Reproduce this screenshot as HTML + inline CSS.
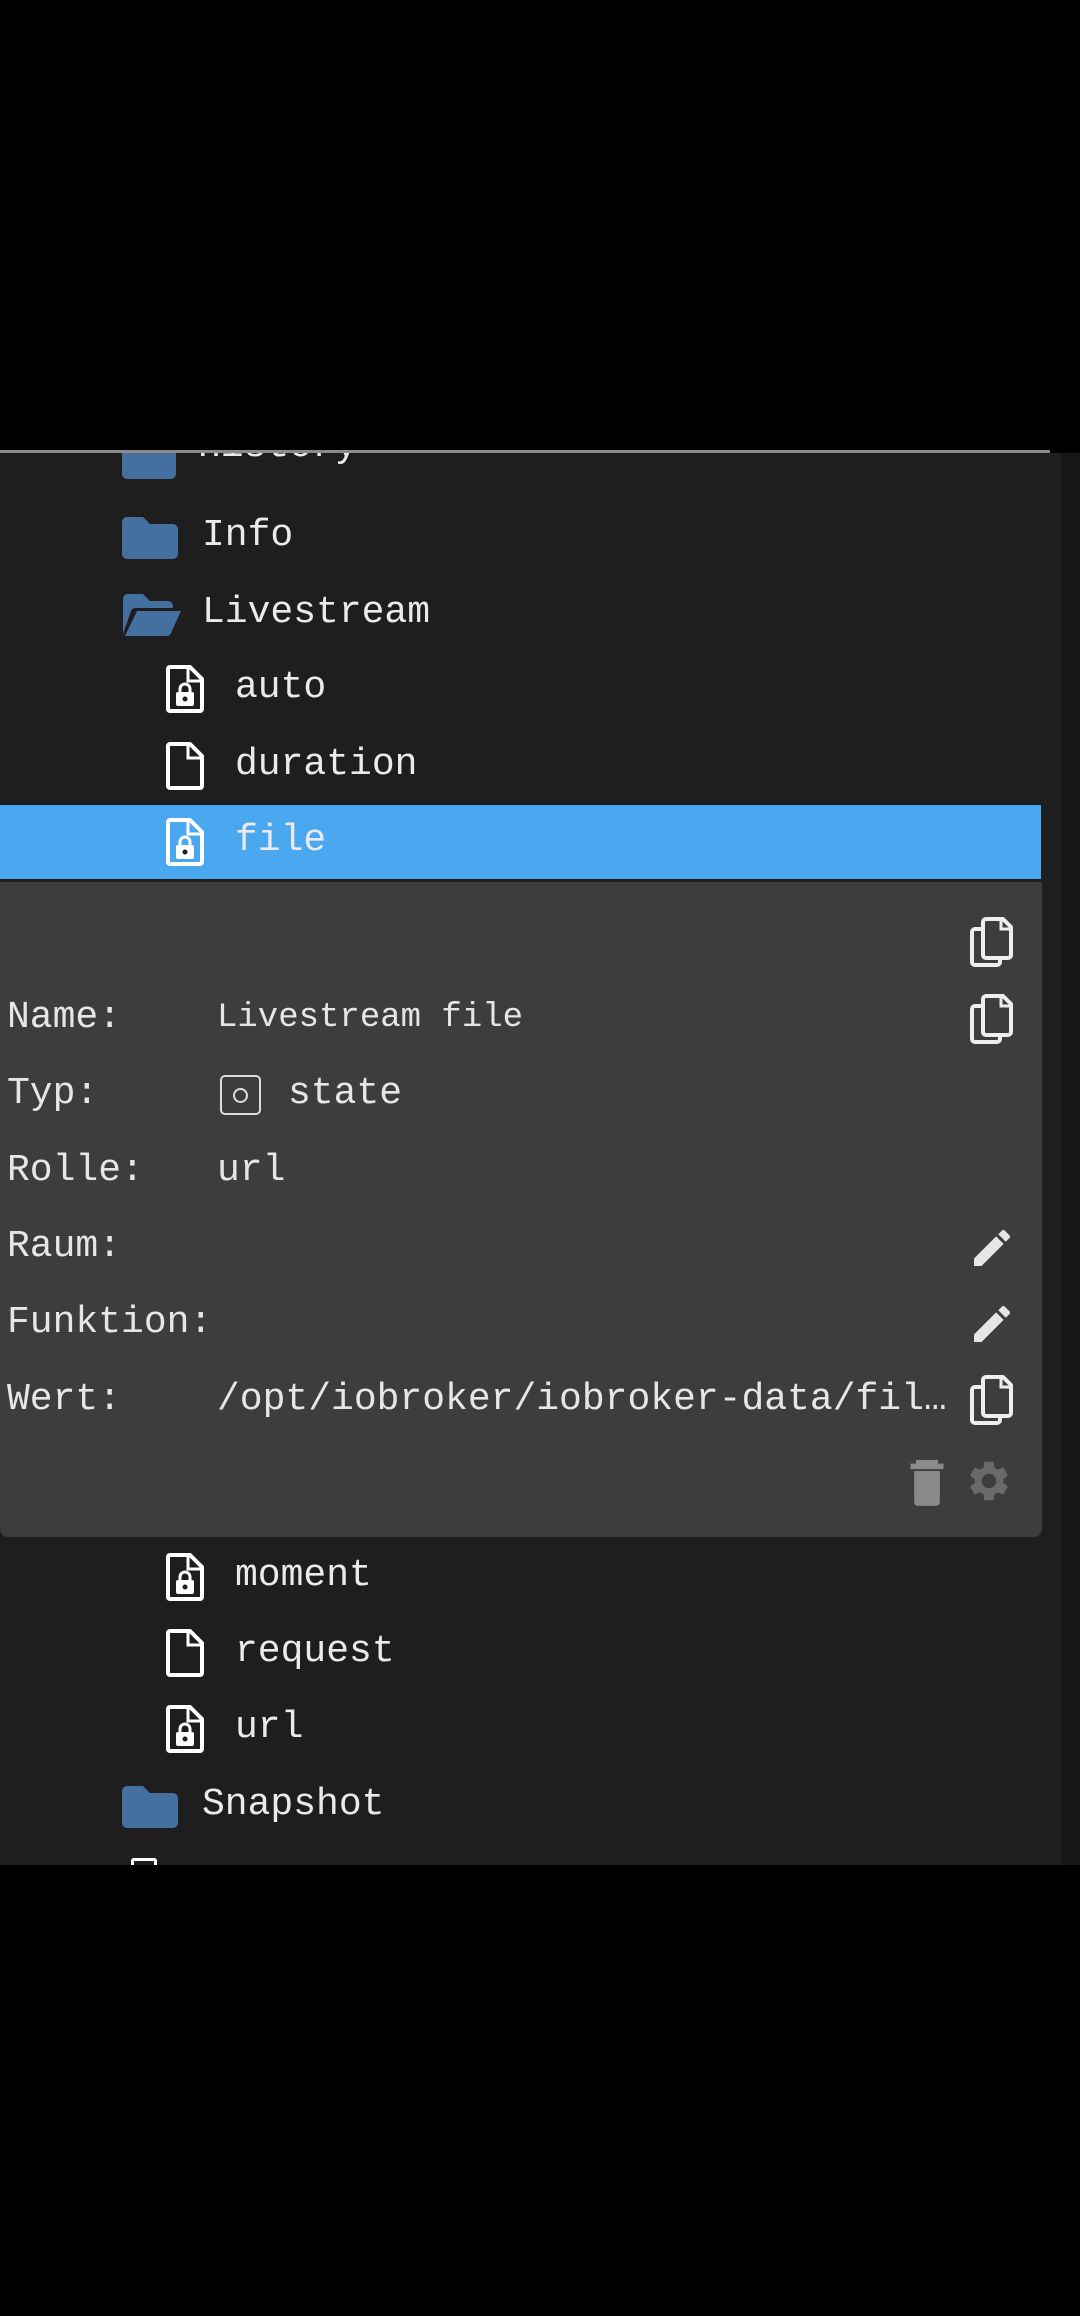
<!DOCTYPE html>
<html><head><meta charset="utf-8"><style>
*{margin:0;padding:0;box-sizing:border-box}
body{width:1080px;height:2316px;background:#000;position:relative;overflow:hidden;font-family:"Liberation Mono",monospace;}
.a{position:absolute}
.t{position:absolute;color:#eaeaea;font-size:38px;line-height:44px;white-space:nowrap}
.c{position:absolute;color:#e6e6e6;font-size:38px;line-height:44px;white-space:nowrap}
</style></head><body>
<div class="a" style="left:0;top:450px;width:1050px;height:3px;background:#8a8a8a"></div>
<div class="a" style="left:0;top:453px;width:1062px;height:1412px;background:#1e1e1e;overflow:hidden">
</div>
<div class="a" style="left:1062px;top:453px;width:18px;height:1412px;background:#161616"></div>
<!-- history folder partial -->
<div class="a" style="left:122px;top:453px;width:54px;height:28px;overflow:hidden"><div style="position:absolute;top:-14px;width:54px;height:40px;background:#43709f;border-radius:5px"></div></div>
<div class="a" style="left:198px;top:453px;width:200px;height:22px;overflow:hidden"><div class="t" style="top:-28px;left:0">History</div></div>
<svg class="a" style="left:122px;top:517px" width="56" height="42" viewBox="0 0 56 42"><path d="M5 0h16l7 7h23a5 5 0 0 1 5 5v25a5 5 0 0 1-5 5H5a5 5 0 0 1-5-5V5a5 5 0 0 1 5-5z" fill="#43709f"/></svg>
<div class="t" style="left:202px;top:514px">Info</div>
<svg class="a" style="left:122px;top:594px" width="60" height="42" viewBox="0 0 60 42"><path d="M5 0h16l7 7h18a5 5 0 0 1 5 5v2H14a5 5 0 0 0-5 3L1 40V5a5 5 0 0 1 4-5z" fill="#43709f"/><path d="M15 17h44l-10 22a5 5 0 0 1-4 3H3z" fill="#43709f"/></svg>
<div class="t" style="left:202px;top:591px">Livestream</div>
<div class="a" style="left:0;top:805px;width:1041px;height:74px;background:#4aa8f0"></div>
<svg width="0" height="0" style="position:absolute"><defs>
<symbol id="f" viewBox="0 0 38 48"><path d="M4 2h20l12 12v30a2 2 0 0 1-2 2H4a2 2 0 0 1-2-2V4a2 2 0 0 1 2-2z" fill="none" stroke="#fff" stroke-width="4" stroke-linejoin="round"/><path d="M22 2v14h14" fill="none" stroke="#fff" stroke-width="3"/></symbol>
<symbol id="fl" viewBox="0 0 38 48"><path d="M4 2h20l12 12v30a2 2 0 0 1-2 2H4a2 2 0 0 1-2-2V4a2 2 0 0 1 2-2z" fill="none" stroke="#fff" stroke-width="4" stroke-linejoin="round"/><path d="M22 2v14h14" fill="none" stroke="#fff" stroke-width="3"/><path d="M14 28v-4a5 5 0 0 1 10 0v4" fill="none" stroke="#fff" stroke-width="3"/><rect x="10" y="27" width="18" height="14" rx="2" fill="#fff"/><circle cx="19" cy="34" r="2.5" fill="#1e1e1e"/></symbol>
<symbol id="cp" viewBox="0 0 44 50"><path d="M14 12H6a3 3 0 0 0-3 3v30a3 3 0 0 0 3 3h22a3 3 0 0 0 3-3v-4" fill="none" stroke="#eee" stroke-width="4"/><path d="M17 2h17l8 8v28a3 3 0 0 1-3 3H17a3 3 0 0 1-3-3V5a3 3 0 0 1 3-3z" fill="none" stroke="#eee" stroke-width="4" stroke-linejoin="round"/><path d="M32 2v10h10" fill="none" stroke="#eee" stroke-width="3"/></symbol>
<symbol id="pen" viewBox="0 0 24 24"><path d="M3 17.25V21h3.75L17.81 9.94l-3.75-3.75L3 17.25zM20.71 7.04a1 1 0 0 0 0-1.41l-2.34-2.34a1 1 0 0 0-1.41 0l-1.83 1.83 3.75 3.75 1.83-1.83z" fill="#e6e6e6"/></symbol>
</defs></svg>
<svg class="a" style="left:166px;top:665px" width="38" height="48"><use href="#fl"/></svg>
<div class="t" style="left:235px;top:666px">auto</div>
<svg class="a" style="left:166px;top:742px" width="38" height="48"><use href="#f"/></svg>
<div class="t" style="left:235px;top:743px">duration</div>
<svg class="a" style="left:166px;top:818px" width="38" height="48"><use href="#fl"/></svg>
<div class="t" style="left:235px;top:819px">file</div>
<!-- card -->
<div class="a" style="left:0;top:882px;width:1042px;height:655px;background:#3d3d3d;border-radius:0 0 8px 8px"></div>
<svg class="a" style="left:969px;top:917px" width="44" height="50"><use href="#cp"/></svg>
<svg class="a" style="left:969px;top:994px" width="44" height="50"><use href="#cp"/></svg>
<svg class="a" style="left:969px;top:1375px" width="44" height="50"><use href="#cp"/></svg>
<div class="c" style="left:7px;top:996px">Name:</div>
<div class="c" style="left:217px;top:996px;font-size:34px">Livestream file</div>
<div class="c" style="left:7px;top:1072px">Typ:</div>
<div class="a" style="left:220px;top:1075px;width:41px;height:40px;border:2px solid #ddd;border-radius:5px"><div style="position:absolute;left:11px;top:11px;width:15px;height:15px;border:2px solid #ddd;border-radius:50%"></div></div>
<div class="c" style="left:288px;top:1072px">state</div>
<div class="c" style="left:7px;top:1149px">Rolle:</div>
<div class="c" style="left:217px;top:1149px">url</div>
<div class="c" style="left:7px;top:1225px">Raum:</div>
<svg class="a" style="left:968px;top:1224px" width="48" height="48"><use href="#pen"/></svg>
<div class="c" style="left:7px;top:1301px">Funktion:</div>
<svg class="a" style="left:968px;top:1300px" width="48" height="48"><use href="#pen"/></svg>
<div class="c" style="left:7px;top:1378px">Wert:</div>
<div class="c" style="left:217px;top:1378px">/opt/iobroker/iobroker-data/fil…</div>
<svg class="a" style="left:905px;top:1456px" width="44" height="52" viewBox="0 0 24 28"><path d="M6 2h12v2H6zM3 4h18v3H3zM5 8h14v17a2 2 0 0 1-2 2H7a2 2 0 0 1-2-2z" fill="#8a8a8a"/></svg>
<svg class="a" style="left:965px;top:1457px" width="48" height="48" viewBox="0 0 24 24"><path d="M19.14 12.94c.04-.3.06-.61.06-.94 0-.32-.02-.64-.07-.94l2.03-1.58a.49.49 0 0 0 .12-.61l-1.920-3.32a.49.49 0 0 0-.59-.22l-2.39.96c-.5-.38-1.030-.7-1.62-.94l-.36-2.54a.48.48 0 0 0-.48-.41h-3.84a.48.48 0 0 0-.47.41l-.36 2.54c-.59.24-1.13.57-1.62.94l-2.39-.96a.48.48 0 0 0-.59.22L2.74 8.87a.47.47 0 0 0 .12.61l2.03 1.58c-.05.3-.09.63-.09.94s.02.64.07.94l-2.03 1.58a.49.49 0 0 0-.12.61l1.92 3.32c.12.22.37.29.59.22l2.39-.96c.5.38 1.03.7 1.62.94l.36 2.54c.05.24.24.41.48.41h3.84c.24 0 .44-.17.47-.41l.36-2.54c.59-.24 1.13-.56 1.62-.94l2.39.96c.22.08.47 0 .59-.22l1.92-3.32a.47.47 0 0 0-.12-.61l-2.010-1.58zM12 15.6A3.6 3.6 0 1 1 12 8.4a3.6 3.6 0 0 1 0 7.2z" fill="#6a6a6a"/></svg>
<!-- lower rows -->
<svg class="a" style="left:166px;top:1553px" width="38" height="48"><use href="#fl"/></svg>
<div class="t" style="left:235px;top:1554px">moment</div>
<svg class="a" style="left:166px;top:1629px" width="38" height="48"><use href="#f"/></svg>
<div class="t" style="left:235px;top:1630px">request</div>
<svg class="a" style="left:166px;top:1705px" width="38" height="48"><use href="#fl"/></svg>
<div class="t" style="left:235px;top:1706px">url</div>
<svg class="a" style="left:122px;top:1786px" width="56" height="42" viewBox="0 0 56 42"><path d="M5 0h16l7 7h23a5 5 0 0 1 5 5v25a5 5 0 0 1-5 5H5a5 5 0 0 1-5-5V5a5 5 0 0 1 5-5z" fill="#43709f"/></svg>
<div class="t" style="left:202px;top:1783px">Snapshot</div>
<div class="a" style="left:131px;top:1858px;width:26px;height:7px;border:3px solid #fff;border-bottom:none;border-radius:3px 3px 0 0"></div>
</body></html>
